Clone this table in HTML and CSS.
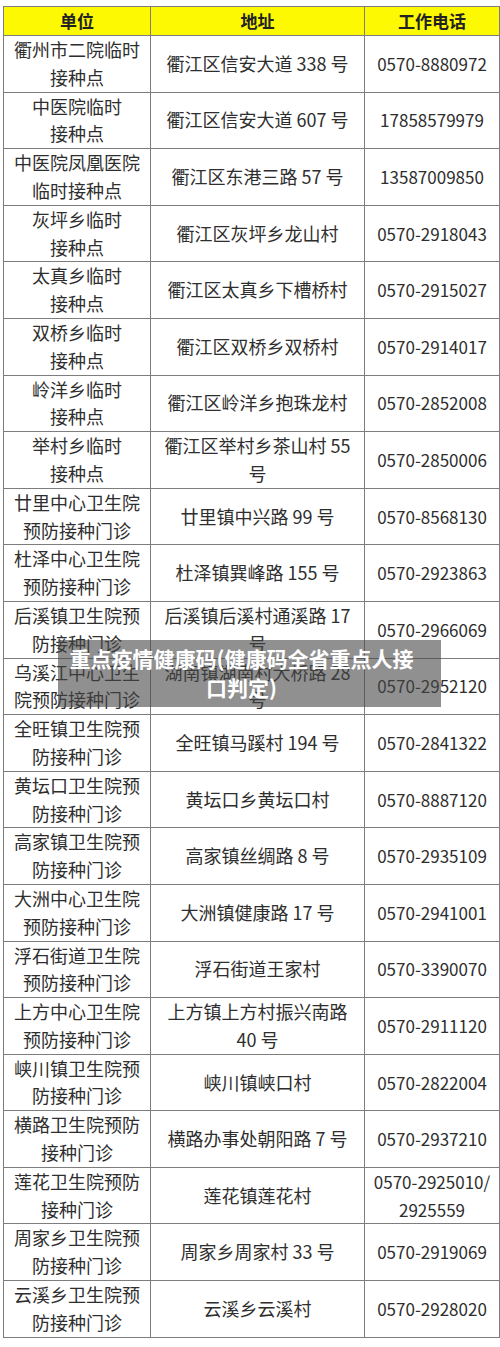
FILE: index.html
```html
<!DOCTYPE html>
<html lang="zh-CN">
<head>
<meta charset="utf-8">
<link rel="stylesheet" href="styles.css">
</head>
<body>
<div class="page">
<table class="sites">
<colgroup><col class="c1"><col class="c2"><col class="c3"></colgroup>
<thead>
<tr><th>单位</th><th>地址</th><th>工作电话</th></tr>
</thead>
<tbody>
<tr><td>衢州市二院临时接种点</td><td>衢江区信安大道 338 号</td><td class="tel">0570-8880972</td></tr>
<tr><td>中医院临时<br>接种点</td><td>衢江区信安大道 607 号</td><td class="tel">17858579979</td></tr>
<tr><td>中医院凤凰医院临时接种点</td><td>衢江区东港三路 57 号</td><td class="tel">13587009850</td></tr>
<tr><td>灰坪乡临时<br>接种点</td><td>衢江区灰坪乡龙山村</td><td class="tel">0570-2918043</td></tr>
<tr><td>太真乡临时<br>接种点</td><td>衢江区太真乡下槽桥村</td><td class="tel">0570-2915027</td></tr>
<tr><td>双桥乡临时<br>接种点</td><td>衢江区双桥乡双桥村</td><td class="tel">0570-2914017</td></tr>
<tr><td>岭洋乡临时<br>接种点</td><td>衢江区岭洋乡抱珠龙村</td><td class="tel">0570-2852008</td></tr>
<tr><td>举村乡临时<br>接种点</td><td>衢江区举村乡茶山村 55 号</td><td class="tel">0570-2850006</td></tr>
<tr><td>廿里中心卫生院预防接种门诊</td><td>廿里镇中兴路 99 号</td><td class="tel">0570-8568130</td></tr>
<tr><td>杜泽中心卫生院预防接种门诊</td><td>杜泽镇巽峰路 155 号</td><td class="tel">0570-2923863</td></tr>
<tr><td>后溪镇卫生院预防接种门诊</td><td>后溪镇后溪村通溪路 17 号</td><td class="tel">0570-2966069</td></tr>
<tr><td>乌溪江中心卫生院预防接种门诊</td><td>湖南镇湖南村大桥路 28 号</td><td class="tel">0570-2952120</td></tr>
<tr><td>全旺镇卫生院预防接种门诊</td><td>全旺镇马蹊村 194 号</td><td class="tel">0570-2841322</td></tr>
<tr><td>黄坛口卫生院预防接种门诊</td><td>黄坛口乡黄坛口村</td><td class="tel">0570-8887120</td></tr>
<tr><td>高家镇卫生院预防接种门诊</td><td>高家镇丝绸路 8 号</td><td class="tel">0570-2935109</td></tr>
<tr><td>大洲中心卫生院预防接种门诊</td><td>大洲镇健康路 17 号</td><td class="tel">0570-2941001</td></tr>
<tr><td>浮石街道卫生院预防接种门诊</td><td>浮石街道王家村</td><td class="tel">0570-3390070</td></tr>
<tr><td>上方中心卫生院预防接种门诊</td><td>上方镇上方村振兴南路 40 号</td><td class="tel">0570-2911120</td></tr>
<tr><td>峡川镇卫生院预防接种门诊</td><td>峡川镇峡口村</td><td class="tel">0570-2822004</td></tr>
<tr><td>横路卫生院预防接种门诊</td><td>横路办事处朝阳路 7 号</td><td class="tel">0570-2937210</td></tr>
<tr><td>莲花卫生院预防接种门诊</td><td>莲花镇莲花村</td><td class="tel">0570-2925010/<br>2925559</td></tr>
<tr><td>周家乡卫生院预防接种门诊</td><td>周家乡周家村 33 号</td><td class="tel">0570-2919069</td></tr>
<tr><td>云溪乡卫生院预防接种门诊</td><td>云溪乡云溪村</td><td class="tel">0570-2928020</td></tr>
</tbody>
</table>
<div class="caption">重点疫情健康码(健康码全省重点人接口判定)</div>
</div>
</body>
</html>
```
FILE: styles.css
```css
html, body {
  margin: 0;
  padding: 0;
  background: #ffffff;
}
body {
  font-family: "Noto Sans CJK SC", "Noto Sans", sans-serif;
  color: #2e2e2e;
}
.page {
  position: relative;
  padding: 6px 2px 0 3px;
}
.sites {
  border-collapse: collapse;
  table-layout: fixed;
  width: 496px;
  font-size: 18px;
}
.c1 { width: 147px; }
.c2 { width: 214px; }
.c3 { width: 135px; }
.sites th,
.sites td {
  border: 1px solid #7d7d7d;
  text-align: center;
  vertical-align: middle;
  padding: 0 4px;
  word-break: break-all;
}
.sites th {
  background: #fdf902;
  font-size: 17px;
  font-weight: bold;
  color: #222;
  height: 28px;
  line-height: 28px;
}
.sites td {
  height: 55.6px;
  line-height: 27.8px;
}
.sites td:nth-child(2) {
  word-break: normal;
  padding: 0 6px;
}
.sites td.tel {
  word-break: normal;
  padding: 0 2px;
  font-size: 17px;
}
.caption {
  position: absolute;
  left: 58px;
  top: 640px;
  width: 383px;
  height: 67px;
  box-sizing: border-box;
  padding: 4px 26px 4px 10px;
  background: rgba(70, 70, 70, 0.6);
  color: #ffffff;
  font-size: 21px;
  font-weight: bold;
  line-height: 29px;
  text-align: center;
}
```
